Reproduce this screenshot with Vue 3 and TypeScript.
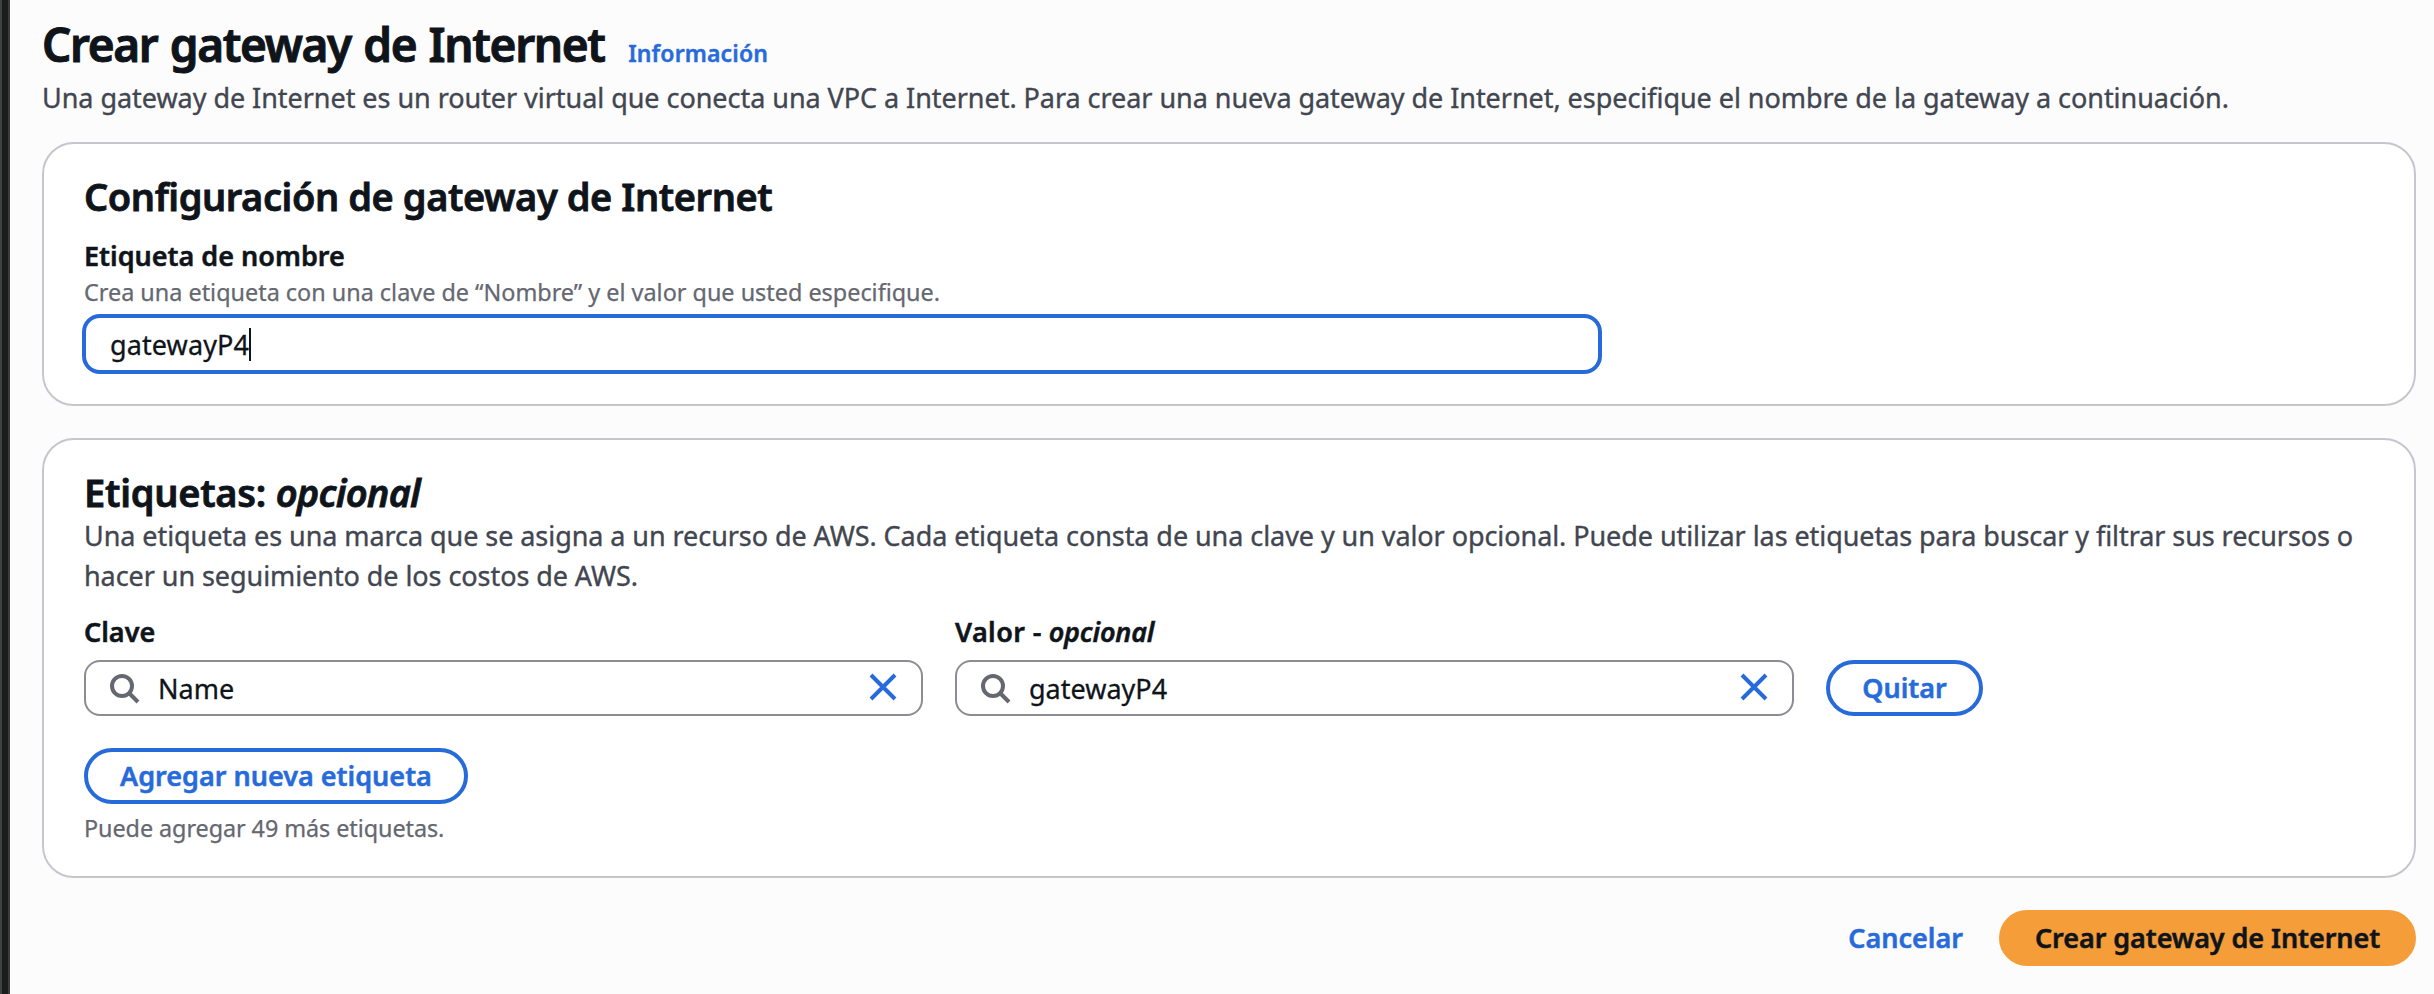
<script setup lang="ts">
import { ref } from 'vue'

interface TagField {
  id: string
  label: string
  optional: boolean
  value: string
}

const gatewayName = ref('gatewayP4')
const fields = ref<TagField[]>([
  { id: 'key', label: 'Clave', optional: false, value: 'Name' },
  { id: 'value', label: 'Valor -', optional: true, value: 'gatewayP4' },
])
const remaining = 49

function clearField(field: TagField) {
  field.value = ''
}
</script>

<template>
  <div class="page">
    <div class="rail"></div>
    <main class="content">
      <header class="page-header">
        <div class="title-row">
          <h1>Crear gateway de Internet</h1>
          <a class="info">Información</a>
        </div>
        <p class="description">Una gateway de Internet es un router virtual que conecta una VPC a Internet. Para crear una nueva gateway de Internet, especifique el nombre de la gateway a continuación.</p>
      </header>

      <section class="card card-config">
        <h2>Configuración de gateway de Internet</h2>
        <div class="label name-label">Etiqueta de nombre</div>
        <div class="hint">Crea una etiqueta con una clave de “Nombre” y el valor que usted especifique.</div>
        <div class="name-input"><span>{{ gatewayName }}</span><i class="caret"></i></div>
      </section>

      <section class="card card-tags">
        <h2 class="tags-title">Etiquetas: <em>opcional</em></h2>
        <p class="tags-description">Una etiqueta es una marca que se asigna a un recurso de AWS. Cada etiqueta consta de una clave y un valor opcional. Puede utilizar las etiquetas para buscar y filtrar sus recursos o hacer un seguimiento de los costos de AWS.</p>
        <div class="tag-row">
          <div v-for="field in fields" :key="field.id" class="tag-field">
            <div class="label" :class="{ 'label-optional': field.optional }">{{ field.label }}<em v-if="field.optional"> opcional</em></div>
            <div class="search-input">
              <svg class="icon-search" viewBox="0 0 32 32" fill="none">
                <circle cx="12" cy="14" r="10" />
                <path d="M19 21l9 9" />
              </svg>
              <span class="search-text">{{ field.value }}</span>
              <svg class="icon-close" viewBox="0 0 32 32" fill="none" @click="clearField(field)">
                <path d="M4 3l24 24M28 3L4 27" />
              </svg>
            </div>
          </div>
          <button class="btn btn-remove">Quitar</button>
        </div>
        <button class="btn btn-add">Agregar nueva etiqueta</button>
        <div class="hint count-hint">Puede agregar {{ remaining }} más etiquetas.</div>
      </section>

      <footer class="actions">
        <a class="cancel">Cancelar</a>
        <button class="btn btn-primary">Crear gateway de Internet</button>
      </footer>
    </main>
  </div>
</template>

<style>
html,
body {
  margin: 0;
  background: #fcfcfd;
}
</style>

<style scoped>
.page {
  display: flex;
  box-sizing: border-box;
  width: 100%;
  height: 994px;
  overflow: hidden;
  background: #fcfcfd;
  color: #0f141a;
  font-family: 'Noto Sans', 'Open Sans', sans-serif;
  font-size: 27px;
}

.page * {
  box-sizing: border-box;
}

.rail {
  flex: none;
  width: 10px;
  background: #1b1d1c;
  border-left: 2px solid #404343;
  border-right: 2px solid #3a3d3e;
}

.content {
  flex: 1;
  min-width: 0;
  padding: 14px 18px 0 32px;
}

h1,
h2,
p {
  margin: 0;
}

.page-header {
  height: 128px;
}

.title-row {
  display: flex;
  align-items: baseline;
  gap: 23.5px;
  height: 64px;
}

h1 {
  font-size: 46px;
  line-height: 60px;
  font-weight: 600;
  letter-spacing: -1.35px;
  word-spacing: 1.7px;
  -webkit-text-stroke: 1px currentColor;
}

.info {
  color: #276bdb;
  font-size: 23px;
  font-weight: 600;
  letter-spacing: 0.15px;
  -webkit-text-stroke: 0.4px currentColor;
}

.description,
.tags-description {
  color: #424650;
  line-height: 40px;
  letter-spacing: -0.045px;
  -webkit-text-stroke: 0.35px currentColor;
}

.tags-description {
  letter-spacing: -0.068px;
}

.description {
  white-space: nowrap;
}

.card {
  border: 2px solid #c6c6cd;
  border-radius: 32px;
  background: #fff;
  padding: 28px 40px 0;
}

.card-config {
  height: 264px;
}

.card-tags {
  height: 440px;
  margin-top: 32px;
}

h2 {
  font-size: 38px;
  line-height: 48px;
  font-weight: 600;
  letter-spacing: -0.43px;
  -webkit-text-stroke: 0.8px currentColor;
}

.tags-title {
  letter-spacing: -0.25px;
}

.tags-title em {
  letter-spacing: -0.75px;
}

.label {
  line-height: 40px;
  font-weight: 600;
  -webkit-text-stroke: 0.5px currentColor;
}

.label-optional {
  letter-spacing: 0.4px;
}

.label em {
  letter-spacing: -0.15px;
}

.name-label {
  margin-top: 16px;
}

.hint {
  color: #656871;
  font-size: 23.4px;
  line-height: 32px;
  -webkit-text-stroke: 0.25px currentColor;
}

.name-input {
  display: flex;
  align-items: center;
  width: 1520px;
  height: 60px;
  margin: 6px 0 0 -2px;
  padding: 0 24px;
  border: 4px solid #276bdb;
  border-radius: 18px;
  background: #fff;
  letter-spacing: 0.1px;
  -webkit-text-stroke: 0.3px currentColor;
}

.caret {
  width: 2px;
  height: 33px;
  background: #0f141a;
}

.tag-row {
  display: grid;
  grid-template-columns: 838.5px 838.5px 157px;
  column-gap: 32.5px;
  align-items: end;
  margin-top: 16px;
}

.search-input {
  display: flex;
  align-items: center;
  height: 56px;
  margin-top: 8px;
  padding: 0 22px 0 24px;
  border: 2px solid #8c8c94;
  border-radius: 16px;
  background: #fff;
}

.search-text {
  flex: 1;
  margin-left: 16px;
  -webkit-text-stroke: 0.3px currentColor;
}

.icon-search,
.icon-close {
  flex: none;
  width: 32px;
  height: 32px;
  stroke-width: 4;
}

.icon-search {
  stroke: #656871;
}

.icon-close {
  stroke: #276bdb;
}

.btn {
  display: block;
  height: 56px;
  padding: 0 0 2px;
  border: 4px solid #276bdb;
  border-radius: 28px;
  background: #fff;
  color: #276bdb;
  font: inherit;
  font-weight: 600;
  white-space: nowrap;
  -webkit-text-stroke: 0.5px currentColor;
}

.btn-add {
  width: 384px;
  margin-top: 32px;
}

.count-hint {
  margin-top: 8px;
  letter-spacing: -0.07px;
}

.actions {
  display: flex;
  justify-content: flex-end;
  align-items: center;
  gap: 36px;
  margin-top: 32px;
}

.cancel {
  padding-bottom: 2px;
  color: #276bdb;
  font-weight: 600;
  -webkit-text-stroke: 0.5px currentColor;
}

.btn-primary {
  width: 417px;
  border-color: #f49d39;
  background: #f49d39;
  color: #0f141a;
  letter-spacing: -0.08px;
}
</style>
